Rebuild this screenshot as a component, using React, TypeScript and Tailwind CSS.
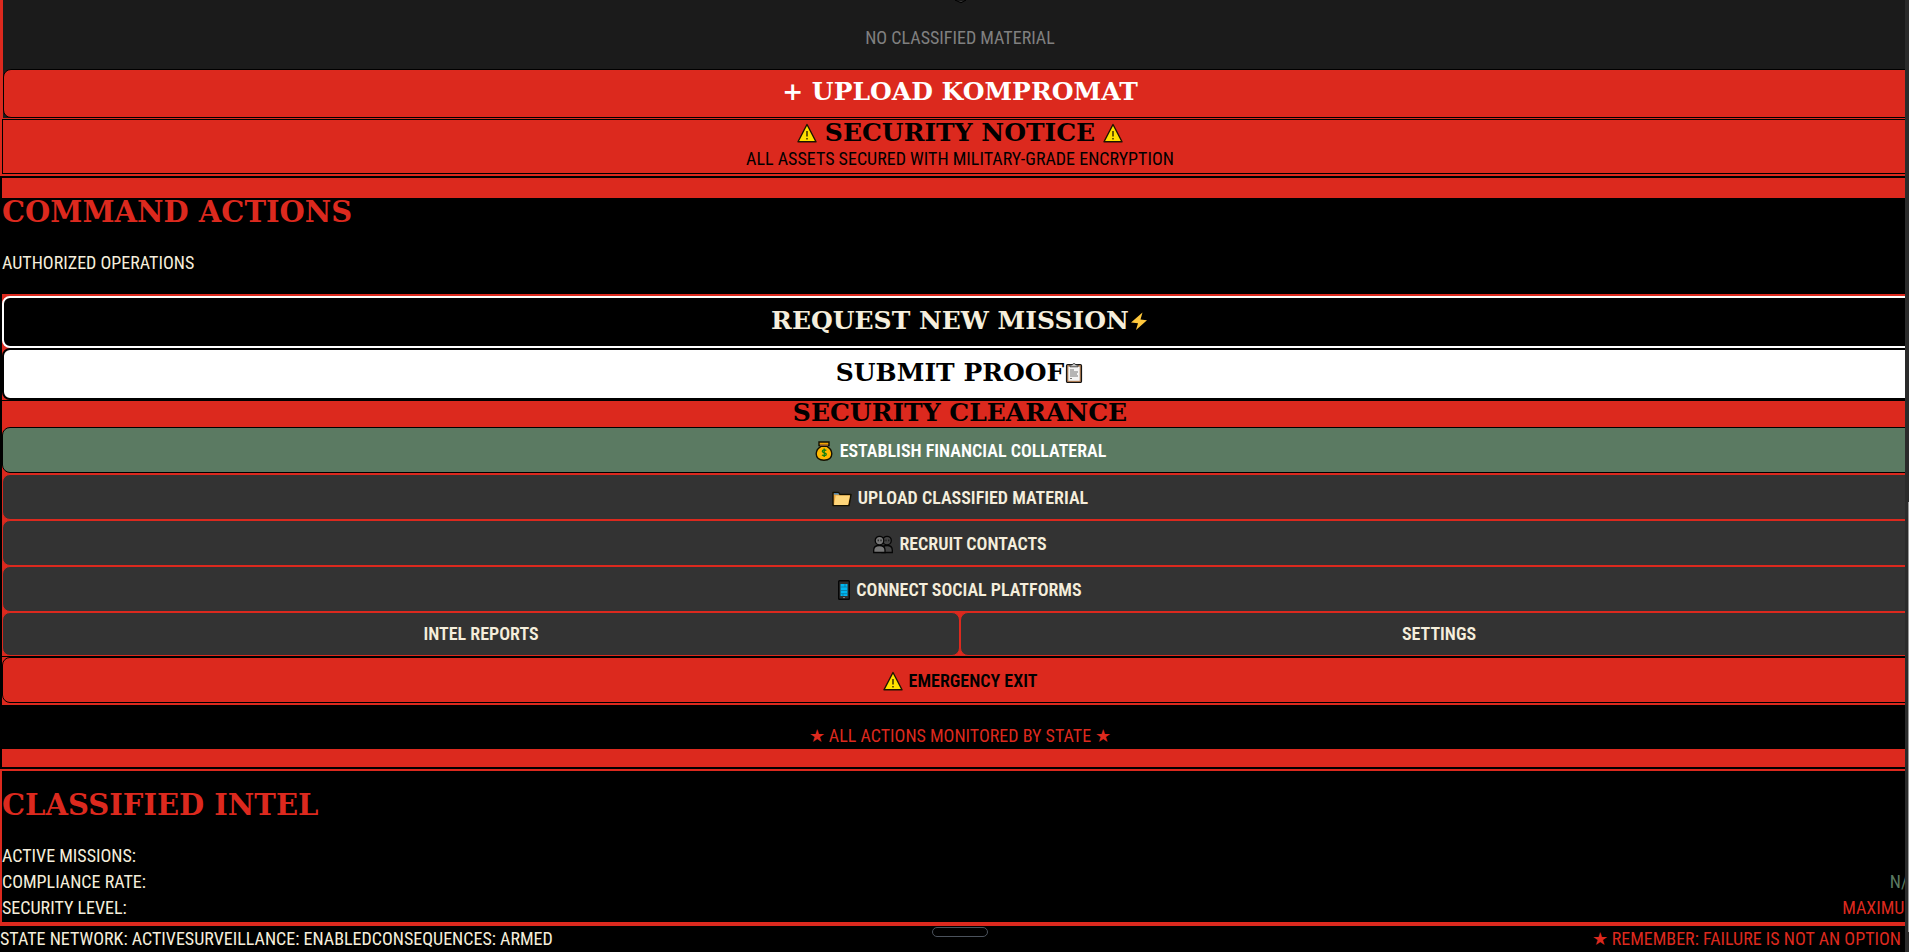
import type { ReactNode } from "react";

const display = "font-['DejaVu_Serif',serif] font-bold";

function Warning() {
  return (
    <svg aria-hidden="true" className="size-5 shrink-0" viewBox="0 0 20 20">
      <path d="M10 1.5 19 18.8H1Z" fill="#ffe000" stroke="#1c1400" strokeWidth="1.4" strokeLinejoin="round" />
      <path d="M10 8v5.5M10 15v1.5" stroke="#1c1400" strokeWidth="1.3" />
    </svg>
  );
}

function Bolt() {
  return (
    <svg aria-hidden="true" className="size-5 shrink-0" viewBox="0 0 20 20">
      <path d="M13.500 1.500 2 11.500 9 12.300 7 19 18 9.200 11.500 8.500Z" fill="#ffc83d" />
    </svg>
  );
}

function Clipboard() {
  return (
    <svg aria-hidden="true" className="size-5 shrink-0" viewBox="0 0 20 20">
      <rect x="2.5" y="1.5" width="15" height="18" rx="1.2" fill="#a87850" stroke="#141414" strokeWidth="1.2" />
      <rect x="4.3" y="3.5" width="11.4" height="14.3" fill="#f4f4f4" />
      <path d="M6 3.8V2h2.2L9 .7h2l.8 1.3H14v1.8Z" fill="#c8c8c8" stroke="#333" strokeWidth=".8" />
      <path d="M6 7h4M6 9h8M6 11h7M6 13h8M6 15.5h2" stroke="#777" strokeWidth="1" />
    </svg>
  );
}

function MoneyBag() {
  return (
    <svg aria-hidden="true" className="size-5 shrink-0" viewBox="0 0 20 20">
      <path d="M7 5.3C3.7 7.300 2.200 10 2.200 12.800c0 3.700 2.800 6.400 7.800 6.400s7.800-2.700 7.800-6.400c0-2.800-1.500-5.500-4.800-7.500Z" fill="#ffb900" stroke="#141000" strokeWidth="1.400" />
      <path d="M5 1h10v3.500H5Z" fill="#f2a500" stroke="#141000" strokeWidth="1.400" />
      <path d="M6 4.200h8" stroke="#9c6240" strokeWidth="1.200" />
      <path d="M12.300 9.500c-1-.9-4-.9-4 .8 0 2 4 1.100 4 3 0 1.700-3.200 1.700-4.300.6M10.200 7.500v8.500" fill="none" stroke="#128010" strokeWidth="1.300" />
    </svg>
  );
}

function Folder() {
  return (
    <svg aria-hidden="true" className="size-5 shrink-0" viewBox="0 0 20 20">
      <path d="M1 17.500V4.500h5.500l1.500 2h11l-2 11Z" fill="#e8a33d" stroke="#141000" strokeWidth="1.400" strokeLinejoin="round" />
      <path d="M2 5.200h4.300l1 1.200H2Z" fill="#2f86d4" />
      <path d="M3.700 7.500h14.200l-2 9.400H2Z" fill="#ffd67a" />
    </svg>
  );
}

function People() {
  return (
    <svg aria-hidden="true" className="size-5 shrink-0" viewBox="0 0 20 20">
      <g stroke="#050505" strokeWidth="1.300">
        <path d="M9 18.500v-2.500c0-3 2-4.500 5-4.500s5.300 1.500 5.300 4.500v2.500Z" fill="#444" />
        <circle cx="14" cy="6.600" r="4.300" fill="#444" />
        <path d="M.7 18.500V16c0-3 2.300-4.500 5.600-4.500S12 13 12 16v2.500Z" fill="#777" />
        <circle cx="6.500" cy="6.600" r="4.300" fill="#777" />
      </g>
      <path d="M5.200 5.500v1.800M8 5.500v1.800M13 5.500v1.800M15.800 5.500v1.800" stroke="#111" />
    </svg>
  );
}

function Phone() {
  return (
    <svg aria-hidden="true" className="h-5 w-3 shrink-0" viewBox="0 0 12 20">
      <rect x=".7" y=".7" width="10.600" height="18.600" rx=".8" fill="#303030" stroke="#050505" strokeWidth="1.400" />
      <path d="M2.500 4h7v12h-7Z" fill="#00b7f1" />
      <path d="M2.500 7h7M2.500 10.500h7M2.500 13.700h7M7 4v3M5 13.700V16" stroke="#087097" strokeWidth=".7" />
      <path d="M5 17.600h2" stroke="#888" />
    </svg>
  );
}

const tones = {
  dark: "border-[#dc291e] bg-[#333333] text-[#f5eedc]",
  green: "border-black bg-[#5b7a62] text-white",
  red: "border-black bg-[#dc291e] text-black",
};

function ActionButton({ tone, icon, children }: { tone: keyof typeof tones; icon?: ReactNode; children: ReactNode }) {
  return (
    <button
      type="button"
      className={`flex w-full items-center justify-center gap-1.5 rounded-lg border font-semibold ${icon ? "h-[46px] pt-0.5" : "h-11"} ${tones[tone]}`}
    >
      {icon}
      {children}
    </button>
  );
}

function Vault() {
  return (
    <section className="border-2 border-t-0 border-[#dc291e] bg-[#dc291e]">
      <div className="border-x border-b border-[#dc291e] bg-[#1b1b1b]">
        <svg aria-hidden="true" className="mx-auto block h-1 w-4" viewBox="0 0 16 4">
          <path d="M3 0 9 2.800 14 0Z" fill="#333" stroke="#000" />
        </svg>
        <p className="pt-[21px] pb-[18px] text-center text-[#808080]">NO CLASSIFIED MATERIAL</p>
        <button type="button" className={`flex h-[49px] w-full items-center justify-center rounded-lg border border-black bg-[#dc291e] pb-1 text-[25px] text-white ${display}`}>
          + UPLOAD KOMPROMAT
        </button>
      </div>
      <div className="flex h-[55px] flex-col items-center border border-black text-black">
        <h3 className={`flex h-[26px] items-center gap-2 text-[25px] leading-[24px] ${display}`}>
          <Warning />
          <span>SECURITY NOTICE</span>
          <Warning />
        </h3>
        <p>ALL ASSETS SECURED WITH MILITARY-GRADE ENCRYPTION</p>
      </div>
    </section>
  );
}

function Commands() {
  return (
    <section className="border-2 border-black bg-black">
      <div className="h-5 bg-[#dc291e]" />
      <h2 className={`pb-6 text-[29px] leading-[28px] text-[#dc291e] ${display}`}>COMMAND ACTIONS</h2>
      <p className="pb-[18px] text-[#f5eedc]">AUTHORIZED OPERATIONS</p>
      <div className="border-y-2 border-[#dc291e] bg-[#dc291e]">
        <button type="button" className={`flex h-[52px] w-full items-center justify-center rounded-lg border-2 border-white bg-black pb-0.5 text-[25px] text-[#f5eedc] ${display}`}>
          REQUEST NEW MISSION
          <Bolt />
        </button>
        <button type="button" className={`flex h-[52px] w-full items-center justify-center rounded-lg border-2 border-black bg-white pb-0.5 text-[25px] text-black ${display}`}>
          SUBMIT PROOF
          <Clipboard />
        </button>
        <div className="border-t border-black">
          <h3 className={`pt-px pb-[3px] text-center text-[25px] leading-[22px] text-black ${display}`}>SECURITY CLEARANCE</h3>
          <ActionButton tone="green" icon={<MoneyBag />}>ESTABLISH FINANCIAL COLLATERAL</ActionButton>
          <div className="pt-px">
            <ActionButton tone="dark" icon={<Folder />}>UPLOAD CLASSIFIED MATERIAL</ActionButton>
            <ActionButton tone="dark" icon={<People />}>RECRUIT CONTACTS</ActionButton>
            <ActionButton tone="dark" icon={<Phone />}>CONNECT SOCIAL PLATFORMS</ActionButton>
          </div>
          <div className="grid grid-cols-2">
            <ActionButton tone="dark">INTEL REPORTS</ActionButton>
            <ActionButton tone="dark">SETTINGS</ActionButton>
          </div>
        </div>
        <div className="border-t border-black">
          <ActionButton tone="red" icon={<Warning />}>EMERGENCY EXIT</ActionButton>
        </div>
      </div>
      <p className="pt-[18px] text-center text-[#dc291e]">★ ALL ACTIONS MONITORED BY STATE ★</p>
      <div className="h-[18px] bg-[#dc291e]" />
    </section>
  );
}

const intel = [
  { label: "ACTIVE MISSIONS:", value: "", color: "text-[#f5eedc]" },
  { label: "COMPLIANCE RATE:", value: "N/A", color: "text-[#5b7a62]" },
  { label: "SECURITY LEVEL:", value: "MAXIMUM", color: "text-[#dc291e]" },
];

function Intel() {
  return (
    <section className="border-2 border-[#dc291e] bg-black">
      <h2 className={`pt-5 pb-6 text-[29px] leading-[28px] text-[#dc291e] ${display}`}>CLASSIFIED INTEL</h2>
      <dl className="pb-[3px]">
        {intel.map((row) => (
          <div key={row.label} className="flex justify-between">
            <dt className="text-[#f5eedc]">{row.label}</dt>
            <dd className={row.color}>{row.value}</dd>
          </div>
        ))}
      </dl>
    </section>
  );
}

export default function App() {
  return (
    <div className="flex h-screen overflow-hidden bg-black font-['Roboto_Condensed','Roboto',sans-serif] text-lg leading-[26px]">
      <div className="flex min-w-0 flex-1 flex-col overflow-hidden">
        <main className="min-h-0 w-[calc(100%+15px)] flex-1 overflow-hidden">
          <Vault />
          <Commands />
          <Intel />
        </main>
        <footer className="relative flex shrink-0 justify-between border-t-4 border-[#dc291e] bg-black pr-1">
          <p className="text-[#f5eedc]">
            <span>STATE NETWORK: ACTIVE</span>
            <span>SURVEILLANCE: ENABLED</span>
            <span>CONSEQUENCES: ARMED</span>
          </p>
          <p className="text-[#dc291e]">★ REMEMBER: FAILURE IS NOT AN OPTION</p>
          <div className="absolute top-px left-0 flex w-[calc(100%+15px)] justify-center">
            <div className="h-2.5 w-14 rounded-full border border-[#4b525c]" />
          </div>
        </footer>
      </div>
      <div aria-hidden="true" className="flex w-1 flex-col items-end bg-[#2b2b2b] pt-[502px] pb-5">
        <div className="w-px flex-1 bg-[#9a9a9a]" />
      </div>
    </div>
  );
}
